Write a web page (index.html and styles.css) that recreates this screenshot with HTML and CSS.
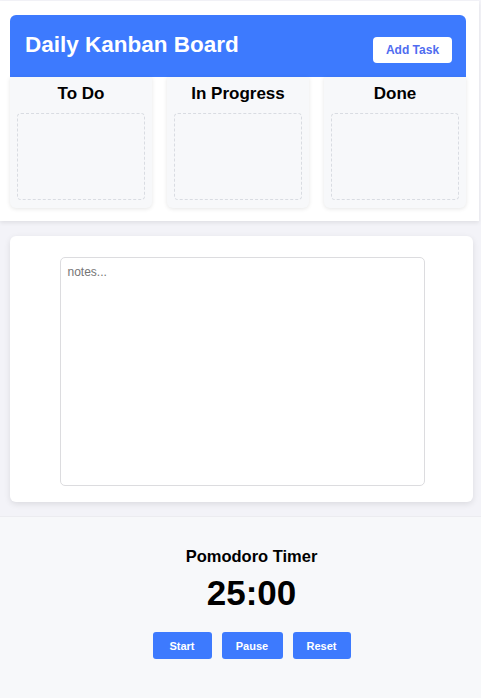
FILE: index.html
```html
<!DOCTYPE html>
<html lang="en">
<head>
    <meta charset="UTF-8">
    <meta name="viewport" content="width=device-width, initial-scale=1.0">
    <title>Daily Kanban Board</title>
    <link rel="stylesheet" href="styles.css">
</head>
<body>
    <div class="board">
        <div class="board-header">
            <h1>Daily Kanban Board</h1>
            <button class="add-btn">Add Task</button>
        </div>
        <div class="columns">
            <div class="column">
                <h2>To Do</h2>
                <div class="dropzone"></div>
            </div>
            <div class="column">
                <h2>In Progress</h2>
                <div class="dropzone"></div>
            </div>
            <div class="column">
                <h2>Done</h2>
                <div class="dropzone"></div>
            </div>
        </div>
    </div>

    <div class="notes-card">
        <textarea placeholder="notes..."></textarea>
    </div>

    <div class="timer">
        <h3>Pomodoro Timer</h3>
        <div class="time">25:00</div>
        <div class="timer-buttons">
            <button class="start">Start</button>
            <button class="pause">Pause</button>
            <button class="reset">Reset</button>
        </div>
    </div>
</body>
</html>
```

FILE: styles.css
```css
body {margin: 0; background: #f3f3f8; font-family: "Liberation Sans", Arial, sans-serif; color: #000;}

/* Kanban board */
.board {
    background: #ffffff;
    margin: 1px 2px 0 0;
    padding: 14px 13px 13px 10px;
    box-shadow: 0 2px 4px rgba(0, 0, 0, 0.08);
}
.board-header {
    background: #3d7afe;
    height: 62px;
    border-radius: 6px 6px 0 0;
    display: flex;
    align-items: center;
    justify-content: space-between;
    padding: 0 14px 0 15px;
}
.board-header h1 {margin: 0 0 3px; color: #fff; font-size: 22.5px; font-weight: bold;}
.add-btn {
    background: #fff;
    color: #4f6cf0;
    border: 0;
    border-radius: 4px;
    width: 79px;
    height: 26px;
    font-family: inherit;
    font-size: 12px;
    font-weight: bold;
    margin-top: 8px;
}

.columns {display: flex; gap: 15px;}
.column {
    flex: 1;
    background: #f7f8fa;
    border-radius: 0 0 6px 6px;
    box-shadow: 0 1px 4px rgba(0, 0, 0, 0.1);
    padding: 6px 7px 8px;
}
.column h2 {margin: 0 0 8px; font-size: 17px; text-align: center; line-height: 22px;}
.dropzone {height: 85px; border: 1px dashed #d9dce2; border-radius: 4px;}

/* Notes */
.notes-card {
    background: #fff;
    margin: 15px 8px 0 10px;
    padding: 21px 0 16px;
    border-radius: 6px;
    box-shadow: 0 2px 6px rgba(0, 0, 0, 0.1);
    display: flex;
    justify-content: center;
}
.notes-card textarea {
    width: 365px;
    height: 229px;
    box-sizing: border-box;
    border: 1px solid #dcdcdf;
    border-radius: 5px;
    padding: 7px;
    resize: none;
    font-family: inherit;
    font-size: 12px;
    margin-left: 1px;
}
.notes-card textarea::placeholder {color: #757575;}

/* Timer */
.timer {
    margin-top: 14px;
    background: #f7f8fa;
    border-top: 1px solid #ececf0;
    padding: 28px 0 42px 22px;
    text-align: center;
}
.timer h3 {margin: 0; font-size: 16.5px; line-height: 22px;}
.time {font-size: 35px; font-weight: bold; margin-top: 6px; line-height: 40px;}
.timer-buttons {display: flex; justify-content: center; gap: 10px; margin-top: 19px;}
.timer-buttons button {
    background: #3d7afe;
    color: #fff;
    border: 0;
    border-radius: 3px;
    height: 27px;
    font-family: inherit;
    font-size: 11px;
    font-weight: bold;
}
.start {width: 59px;}
.pause {width: 61px;}
.reset {width: 58px;}
```
